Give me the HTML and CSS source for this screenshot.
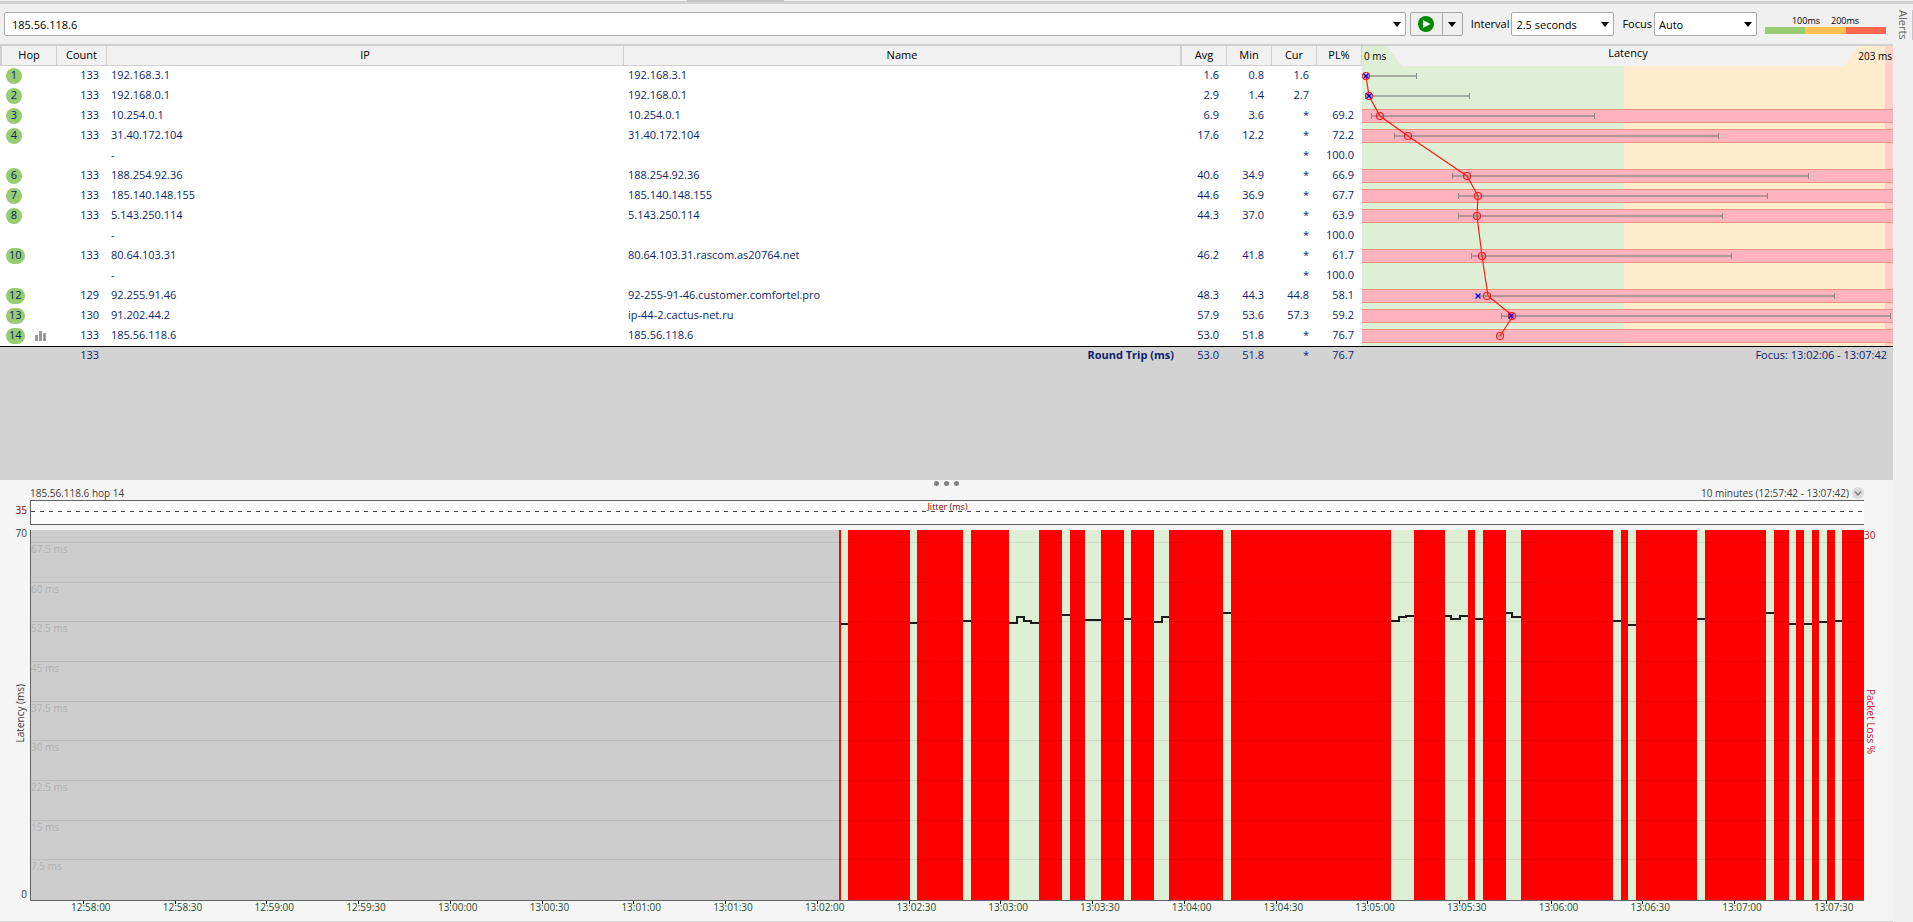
FILE: index.html
```html
<!DOCTYPE html>
<html lang="en">
<head>
<meta charset="utf-8">
<title>185.56.118.6</title>
<link rel="stylesheet" href="styles.css">
</head>
<body>
<div class="app">
  <main class="main">
    <div class="top-strip"><span class="top-tab"></span></div>
    <form class="toolbar">
      <div class="address">
        <input class="address-input" type="text" aria-label="Target" value="185.56.118.6">
        <button class="address-drop" type="button" aria-label="Recent targets"><svg width="8" height="5" viewBox="0 0 8 5"><path d="M0 0H8L4 5Z"/></svg></button>
      </div>
      <div class="run">
        <button class="run-play" type="button" aria-label="Start"><svg width="16" height="16" viewBox="0 0 16 16"><circle cx="8" cy="8" r="8" fill="#008a00"/><path d="M5 4L12.500 8L5 12Z" fill="#fff"/></svg></button>
        <button class="run-drop" type="button" aria-label="Start options"><svg width="8" height="5" viewBox="0 0 8 5"><path d="M0 0H8L4 5Z"/></svg></button>
      </div>
      <label class="field-label" for="interval">Interval</label>
      <div class="select-box"><select id="interval" class="select"><option>2.5 seconds</option></select><svg class="select-arrow" width="8" height="5" viewBox="0 0 8 5"><path d="M0 0H8L4 5Z"/></svg></div>
      <label class="field-label" for="focus">Focus</label>
      <div class="select-box"><select id="focus" class="select"><option>Auto</option></select><svg class="select-arrow" width="8" height="5" viewBox="0 0 8 5"><path d="M0 0H8L4 5Z"/></svg></div>
      <div class="legend">
        <div class="legend-labels"><span>100ms</span><span>200ms</span></div>
        <div class="legend-bar"><i class="good"></i><i class="warn"></i><i class="bad"></i></div>
      </div>
    </form>

    <section class="trace">
      <div class="trace-table">
        <table class="hops">
          <colgroup><col class="c-hop"><col class="c-count"><col class="c-ip"><col class="c-name"><col class="c-avg"><col class="c-num"><col class="c-num"><col class="c-num"></colgroup>
          <thead><tr><th>Hop</th><th>Count</th><th>IP</th><th>Name</th><th>Avg</th><th>Min</th><th>Cur</th><th>PL%</th></tr></thead>
          <tbody>
            <tr><td><b class="hop">1</b></td><td>133</td><td>192.168.3.1</td><td>192.168.3.1</td><td>1.6</td><td>0.8</td><td>1.6</td><td></td></tr>
            <tr><td><b class="hop">2</b></td><td>133</td><td>192.168.0.1</td><td>192.168.0.1</td><td>2.9</td><td>1.4</td><td>2.7</td><td></td></tr>
            <tr><td><b class="hop">3</b></td><td>133</td><td>10.254.0.1</td><td>10.254.0.1</td><td>6.9</td><td>3.6</td><td>*</td><td>69.2</td></tr>
            <tr><td><b class="hop">4</b></td><td>133</td><td>31.40.172.104</td><td>31.40.172.104</td><td>17.6</td><td>12.2</td><td>*</td><td>72.2</td></tr>
            <tr><td></td><td></td><td>-</td><td></td><td></td><td></td><td>*</td><td>100.0</td></tr>
            <tr><td><b class="hop">6</b></td><td>133</td><td>188.254.92.36</td><td>188.254.92.36</td><td>40.6</td><td>34.9</td><td>*</td><td>66.9</td></tr>
            <tr><td><b class="hop">7</b></td><td>133</td><td>185.140.148.155</td><td>185.140.148.155</td><td>44.6</td><td>36.9</td><td>*</td><td>67.7</td></tr>
            <tr><td><b class="hop">8</b></td><td>133</td><td>5.143.250.114</td><td>5.143.250.114</td><td>44.3</td><td>37.0</td><td>*</td><td>63.9</td></tr>
            <tr><td></td><td></td><td>-</td><td></td><td></td><td></td><td>*</td><td>100.0</td></tr>
            <tr><td><b class="hop">10</b></td><td>133</td><td>80.64.103.31</td><td>80.64.103.31.rascom.as20764.net</td><td>46.2</td><td>41.8</td><td>*</td><td>61.7</td></tr>
            <tr><td></td><td></td><td>-</td><td></td><td></td><td></td><td>*</td><td>100.0</td></tr>
            <tr><td><b class="hop">12</b></td><td>129</td><td>92.255.91.46</td><td>92-255-91-46.customer.comfortel.pro</td><td>48.3</td><td>44.3</td><td>44.8</td><td>58.1</td></tr>
            <tr><td><b class="hop">13</b></td><td>130</td><td>91.202.44.2</td><td>ip-44-2.cactus-net.ru</td><td>57.9</td><td>53.6</td><td>57.3</td><td>59.2</td></tr>
            <tr><td><b class="hop">14</b><svg class="hop-chart" width="11" height="10" viewBox="0 0 11 10"><path d="M0 4H3V10H0ZM4 0H7V10H4ZM8 2H11V10H8Z"/></svg></td><td>133</td><td>185.56.118.6</td><td>185.56.118.6</td><td>53.0</td><td>51.8</td><td>*</td><td>76.7</td></tr>
          </tbody>
          <tfoot><tr><td></td><td>133</td><td></td><td class="round-trip">Round Trip (ms)</td><td>53.0</td><td>51.8</td><td>*</td><td>76.7</td></tr></tfoot>
        </table>
      </div>
      <div class="latency">
        <div class="latency-graph">
          <svg class="latency-svg" viewBox="0 0 531 300" preserveAspectRatio="none">
            <rect width="262" height="300" fill="#dfefd6"/>
            <rect x="262" width="261" height="300" fill="#ffebce"/>
            <rect x="523" width="8" height="300" fill="#ffd0cc"/>
            <path d="M25 0H496L482 20H40Z" fill="#f1f1f1"/>
            <g fill="#ffb3be" stroke="#e9967a" shape-rendering="crispEdges">
              <path d="M-2 63.500H533V76.500H-2ZM-2 83.500H533V96.500H-2ZM-2 123.500H533V136.500H-2Z M-2 143.500H533V156.500H-2ZM-2 163.500H533V176.500H-2ZM-2 203.500H533V216.500H-2ZM-2 243.500H533V256.500H-2ZM-2 263.500H533V276.500H-2ZM-2 283.500H533V296.500H-2Z"/>
            </g>
            <g stroke="#808080" stroke-opacity=".6" fill="none">
              <path stroke-width="2" d="M2 30H54M3 50H107M9 70H232M32 90H356M90 130H447M96 150H405M96 170H360M109 210H369M116 250H472M139 270H528M136 290H140"/>
              <path stroke-opacity=".9" d="M54.500 27V33M107.500 47V53M3.500 47V53M9.500 67V73M232.500 67V73M32.500 87V93M356.500 87V93M90.500 127V133M446.500 127V133M96.500 147V153M405.500 147V153M96.500 167V173M360.500 167V173M109.500 207V213M369.500 207V213M472.500 247V253M139.500 267V273M528.500 267V273"/>
            </g>
            <path d="M4 30L7 50L18 70L46 90L105 130L116 150L115 170L120 210L126 250L151 270L138 290" fill="none" stroke="#ff1a1a" stroke-width="1.200"/>
            <g fill="none" stroke="#ff1a1a" stroke-width="1.200"><circle cx="4" cy="30" r="3.500"/><circle cx="7" cy="50" r="3.500"/><circle cx="18" cy="70" r="3.500"/><circle cx="46" cy="90" r="3.500"/><circle cx="105" cy="130" r="3.500"/><circle cx="116" cy="150" r="3.500"/><circle cx="115" cy="170" r="3.500"/><circle cx="120" cy="210" r="3.500"/><circle cx="125" cy="250" r="3.500"/><circle cx="150" cy="270" r="3.500"/><circle cx="138" cy="290" r="3.500"/></g>
            <path d="M1.500 27.500L6.500 32.500M6.500 27.500L1.500 32.500M4.500 47.500L9.500 52.500M9.500 47.500L4.500 52.500M113.500 247.500L118.500 252.500M118.500 247.500L113.500 252.500M146.500 267.500L151.500 272.500M151.500 267.500L146.500 272.500" stroke="#0000ee" stroke-width="1.300"/>
          </svg>
          <div class="latency-head"><span class="scale-end">0 ms</span><span>Latency</span><span class="scale-end">203 ms</span></div>
        </div>
        <div class="focus-range">Focus: 13:02:06 - 13:07:42</div>
      </div>
    </section>

    <section class="timeline">
      <div class="splitter"><i></i><i></i><i></i></div>
      <header class="timeline-head"><span>185.56.118.6 hop 14</span><button class="period" type="button">10 minutes (12:57:42 - 13:07:42)<svg width="12" height="12" viewBox="0 0 12 12"><circle cx="6" cy="6" r="6" fill="#dcdcdc"/><path d="M3 4.500L6 8L9 4.500" fill="none" stroke="#808080" stroke-width="1.500"/></svg></button></header>
      <div class="jitter-axis">35</div>
      <div class="jitter"><svg class="jitter-line" width="100%" height="1"><path d="M0 0.500H4000" stroke="#444" stroke-dasharray="4 5"/></svg><span class="jitter-label">Jitter (ms)</span></div>
      <div class="y-axis"><span>70</span><span class="axis-title">Latency (ms)</span><span>0</span></div>
      <div class="plot">
        <svg class="plot-svg" viewBox="31 530 1833 370" preserveAspectRatio="none" shape-rendering="crispEdges">
          <rect x="31" y="530" width="808" height="370" fill="#cdcdcd"/>
          <rect x="839" y="530" width="1025" height="370" fill="#dfefd6"/>
          <g fill="none" stroke="#1c1c1c" stroke-width="2">
            <path d="M841 624H848M910 623H917M963 621H971M1009 623H1017V617H1024V621H1031V623H1039M1062 615H1070M1085 620H1101M1124 619H1131M1154 622H1162V617H1169M1223 613H1231M1391 621H1399V617H1406V616H1414M1445 616H1451V619H1460V616H1468M1475 619H1483M1506 613H1512V617H1521M1613 621H1621M1628 625H1636M1697 619H1705M1766 613H1774M1789 624H1796M1804 624H1812M1819 622H1827M1835 621H1842"/>
          </g>
          <path fill="#f00" d="M839 530H841V900H839ZM848 530H910V900H848ZM917 530H963V900H917ZM971 530H1009V900H971ZM1039 530H1062V900H1039ZM1070 530H1085V900H1070ZM1101 530H1124V900H1101ZM1131 530H1154V900H1131ZM1169 530H1223V900H1169ZM1231 530H1391V900H1231ZM1414 530H1445V900H1414ZM1468 530H1475V900H1468ZM1483 530H1506V900H1483ZM1521 530H1613V900H1521ZM1621 530H1628V900H1621ZM1636 530H1697V900H1636ZM1705 530H1766V900H1705ZM1774 530H1789V900H1774ZM1796 530H1804V900H1796ZM1812 530H1819V900H1812ZM1827 530H1835V900H1827ZM1842 530H1864V900H1842Z"/>
        </svg>
        <ul class="grid-lines"><li>67.5 ms</li><li>60 ms</li><li>52.5 ms</li><li>45 ms</li><li>37.5 ms</li><li>30 ms</li><li>22.5 ms</li><li>15 ms</li><li>7.5 ms</li></ul>
      </div>
      <div class="loss-axis"><span>30</span><span class="axis-title">Packet Loss %</span><span></span></div>
      <ul class="times"><li>12:58:00</li><li>12:58:30</li><li>12:59:00</li><li>12:59:30</li><li>13:00:00</li><li>13:00:30</li><li>13:01:00</li><li>13:01:30</li><li>13:02:00</li><li>13:02:30</li><li>13:03:00</li><li>13:03:30</li><li>13:04:00</li><li>13:04:30</li><li>13:05:00</li><li>13:05:30</li><li>13:06:00</li><li>13:06:30</li><li>13:07:00</li><li>13:07:30</li></ul>
    </section>
  </main>
  <aside class="side"><button class="alerts" type="button">Alerts</button></aside>
</div>
</body>
</html>
```
FILE: styles.css
```css
* { box-sizing: border-box; }
body { margin: 0; background: #f0f0f0; color: #1a1a1a; font: 11px/16px "Open Sans", "Noto Sans", sans-serif; }
button, input, select { font: inherit; color: inherit; margin: 0; padding: 0; border: 0; background: none; }
ul { list-style: none; margin: 0; padding: 0; }
svg { display: block; }

.app { display: grid; grid-template-columns: minmax(0, 1fr) 20px; min-height: 100vh; background: linear-gradient(#d0d0d0, #d0d0d0) 0 1px / 100% 3px no-repeat #f0f0f0; }
.main { display: flex; flex-direction: column; min-width: 0; }
.top-strip { height: 4px; display: flex; }
.top-tab { width: 97px; height: 2px; margin-left: 36.300%; background: #c6c6c6; }

.toolbar { display: flex; align-items: center; height: 42px; padding: 0 7px 0 4px; border-bottom: 2px solid #d0d0d0; color: #000; }
.address, .run, .select-box { display: flex; height: 24px; border: 1px solid #a9a9a9; border-radius: 2px; background: #fff; }
.address { flex: 1; }
.address-input { flex: 1; min-width: 0; padding: 1px 0 0 7px; }
.address-drop { width: 14px; padding-right: 2px; display: grid; place-items: center; }
.run { margin: 0 8px 0 4px; background: #efefef; }
.run-play { width: 31px; display: grid; place-items: center; }
.run-drop { width: 20px; display: grid; place-items: center; border-left: 1px solid #a9a9a9; }
.field-label { padding-right: 2px; }
.select-box { position: relative; width: 103px; margin-right: 8px; }
.select { appearance: none; width: 100%; padding: 1px 0 0 4px; }
.select-arrow { position: absolute; right: 4px; top: 9px; pointer-events: none; }
.legend { width: 121px; }
.legend-labels { display: flex; justify-content: center; gap: 11px; font-size: 9px; line-height: 12px; color: #000; }
.legend-bar { display: flex; height: 7px; }
.legend-bar i { flex: 1; }
.good { background: #97cc73; }
.warn { background: #ffc04f; }
.bad { background: #ff6650; }

.trace { display: grid; grid-template-columns: minmax(0, 1362fr) minmax(0, 531fr); height: 434px; color: #0a1f6b; background: #d3d3d3; }
.hops { width: 100%; table-layout: fixed; border-collapse: separate; border-spacing: 0; }
.c-hop { width: 57px; }
.c-count { width: 50px; }
.c-ip { width: 517px; }
.c-avg { width: 45px; }
.c-num { width: 45px; }
.hops th { height: 20px; padding: 0 0 2px; font-weight: 400; line-height: 16px; color: #000; background: #f1f1f1; border-right: 1px solid #d0d0d0; border-bottom: 1px solid #d0d0d0; }
.hops th:first-child { border-left: 2px solid #d0d0d0; }
.hops th:nth-child(4) { border-right-width: 2px; }
.hops tbody { background: #fff; }
.hops td { height: 20px; padding: 0 8px 2px 0; text-align: right; white-space: nowrap; line-height: 16px; }
.hops td:nth-child(1) { text-align: left; padding: 0 0 0 6px; }
.hops td:nth-child(3), .hops td:nth-child(4) { text-align: left; padding-left: 4px; }
.hops tfoot td { height: 18px; border-top: 1px solid #000; }
.hops td.round-trip { text-align: right; font-weight: 700; }
.hop { display: inline-block; min-width: 16px; padding: 0 3px 2px; border-radius: 8px; background: #97cc73; text-align: center; font-weight: 400; line-height: 14px; vertical-align: top; }
.hop-chart { display: inline-block; margin: 3px 0 0 10px; fill: #999; vertical-align: top; }

.latency-graph { display: grid; }
.latency-svg { grid-area: 1 / 1; width: 100%; height: 300px; }
.latency-head { grid-area: 1 / 1; display: grid; grid-template-columns: 1fr auto 1fr; height: 20px; padding: 0 1px 0 2px; line-height: 14px; color: #000; }
.scale-end { font-size: 10px; line-height: 20px; }
.scale-end:last-child { text-align: right; }
.focus-range { border-top: 1px solid #000; padding-right: 6px; text-align: right; line-height: 16px; }

.timeline { flex: 1; display: grid; grid-template: 10px 10px 25px 5px minmax(200px, 1fr) 20px / 30px minmax(0, 1fr) 29px; background: #f5f5f5; border-bottom: 1px solid #d0d0d0; font-size: 10px; color: #3c3c3c; }
.splitter { grid-area: 1 / 1 / 2 / 4; display: flex; justify-content: center; gap: 5px; padding-top: 1px; }
.splitter i { width: 5px; height: 5px; border-radius: 50%; background: #808080; }
.timeline-head { grid-area: 2 / 2; display: flex; justify-content: space-between; line-height: 12px; margin-top: -3px; }
.period { display: flex; gap: 3px; line-height: 12px; }
.jitter-axis { grid-area: 3 / 1; padding-right: 3px; text-align: right; line-height: 20px; color: #8b0000; }
.jitter { grid-area: 3 / 2; display: grid; justify-items: center; border: solid #636363; border-width: 1px 0 1px 1px; background: #fcfcfc; }
.jitter-line { grid-area: 1 / 1; margin-top: 10px; }
.jitter-label { grid-area: 1 / 1; font-size: 9px; line-height: 12px; color: #8b0000; }
.y-axis, .loss-axis { display: flex; flex-direction: column; justify-content: space-between; align-items: center; line-height: 14px; }
.y-axis { grid-area: 5 / 1; align-items: flex-end; padding: 0 3px 0 0; margin-top: -4px; }
.loss-axis { grid-area: 5 / 3; align-items: flex-start; margin-top: -2px; color: #c8102e; }
.axis-title { writing-mode: vertical-rl; }
.y-axis .axis-title { transform: rotate(180deg); }
.plot { grid-area: 5 / 2; position: relative; border: solid #636363; border-width: 0 0 1px 1px; }
.plot-svg { position: absolute; width: 100%; height: 100%; }
.grid-lines { position: absolute; inset: 12px 0 1px; display: grid; grid-template-rows: repeat(9, 1fr); color: #b0b0b0; line-height: 12px; }
.grid-lines li { border-top: 1px solid rgba(0, 0, 0, .08); }
.times { grid-area: 6 / 2; display: flex; padding-left: 41px; line-height: 13px; color: #1e4d2b; }
.times li { flex: 1; min-width: 0; background: linear-gradient(#000, #000) 12px 0 / 1px 3px no-repeat; }
.times li:last-child { flex: 0 0 50px; }

.side { padding-top: 10px; }
.alerts { display: block; width: 20px; height: 30px; writing-mode: vertical-rl; line-height: 18px; color: #666; border-right: 1px solid #c6c6c6; }
```
